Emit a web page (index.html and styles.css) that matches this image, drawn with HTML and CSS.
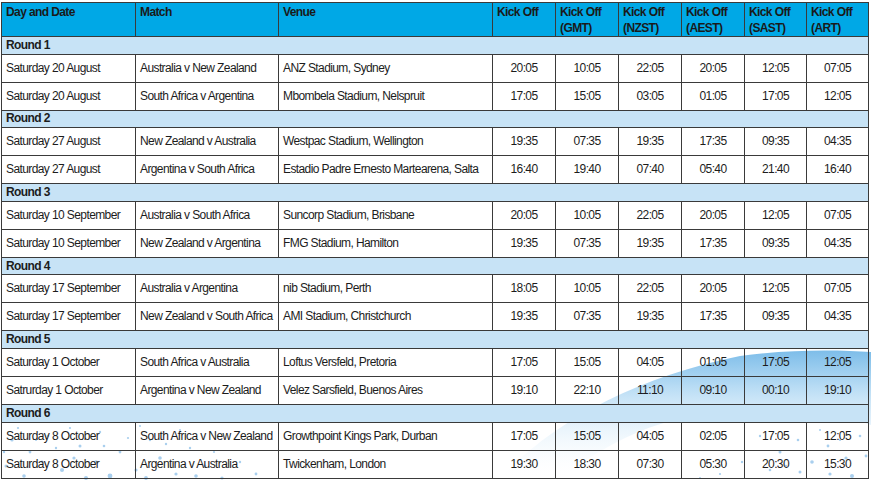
FILE: index.html
```html
<!DOCTYPE html>
<html>
<head>
<meta charset="utf-8">
<link rel="stylesheet" href="styles.css">
</head>
<body>
<div class="page">
  <svg class="decor" width="871" height="480" viewBox="0 0 871 480" aria-hidden="true">
    <defs>
      <linearGradient id="sw" x1="0" y1="0" x2="0" y2="1">
        <stop offset="0" stop-color="#7dbde9"/>
        <stop offset="0.3" stop-color="#bcdef5"/>
        <stop offset="1" stop-color="#ffffff" stop-opacity="0"/>
      </linearGradient>
    </defs>
    <path d="M498 480 C555 420 635 378 740 356 C790 349 840 350 871 352 L871 425 C800 398 700 402 625 438 C595 453 575 466 560 480 Z" fill="url(#sw)"/>
    <g fill="#a9cfee">
      <circle cx="12" cy="440" r="1.6"/><circle cx="30" cy="452" r="1.4"/><circle cx="48" cy="436" r="1.3"/>
      <circle cx="62" cy="470" r="2"/><circle cx="80" cy="446" r="1.5"/><circle cx="96" cy="462" r="1.8"/>
      <circle cx="110" cy="476" r="2.4"/><circle cx="120" cy="452" r="1.4"/><circle cx="136" cy="470" r="1.6"/>
      <circle cx="150" cy="440" r="1.2"/><circle cx="160" cy="458" r="1.8"/><circle cx="176" cy="474" r="1.6"/>
      <circle cx="190" cy="448" r="1.2"/><circle cx="205" cy="466" r="1.5"/><circle cx="222" cy="478" r="1.6"/>
      <circle cx="240" cy="462" r="1.2"/><circle cx="6" cy="466" r="1.5"/><circle cx="24" cy="476" r="1.8"/>
      <circle cx="42" cy="462" r="1.4"/><circle cx="70" cy="428" r="1.1"/><circle cx="100" cy="432" r="1.2"/>
      <circle cx="86" cy="478" r="2"/><circle cx="140" cy="426" r="1"/><circle cx="180" cy="430" r="1"/>
      <circle cx="18" cy="428" r="1.1"/><circle cx="56" cy="448" r="1.2"/><circle cx="74" cy="458" r="1.6"/>
      <circle cx="104" cy="446" r="1.3"/><circle cx="128" cy="438" r="1.1"/><circle cx="146" cy="478" r="1.9"/>
      <circle cx="166" cy="444" r="1.2"/><circle cx="196" cy="476" r="1.8"/><circle cx="214" cy="452" r="1.1"/>
      <circle cx="256" cy="474" r="1.4"/><circle cx="36" cy="440" r="1"/><circle cx="4" cy="452" r="1.2"/>
      <circle cx="760" cy="436" r="1.2"/><circle cx="780" cy="452" r="1.5"/><circle cx="798" cy="440" r="1.3"/>
      <circle cx="812" cy="462" r="1.8"/><circle cx="828" cy="446" r="1.4"/><circle cx="846" cy="458" r="1.6"/>
      <circle cx="860" cy="436" r="1.3"/><circle cx="852" cy="476" r="2"/><circle cx="830" cy="474" r="1.6"/>
      <circle cx="800" cy="472" r="1.5"/><circle cx="770" cy="470" r="1.3"/><circle cx="742" cy="462" r="1.2"/>
      <circle cx="720" cy="474" r="1.1"/><circle cx="866" cy="456" r="1.4"/><circle cx="820" cy="430" r="1"/>
      <circle cx="700" cy="478" r="1"/><circle cx="786" cy="466" r="1.2"/><circle cx="840" cy="440" r="1.1"/>
    </g>
  </svg>
  <table class="fixtures">
    <colgroup>
      <col class="c-date"><col class="c-match"><col class="c-venue">
      <col class="c-time"><col class="c-time"><col class="c-time"><col class="c-time"><col class="c-time2"><col class="c-time2">
    </colgroup>
    <thead>
      <tr class="head">
        <th>Day and Date</th><th>Match</th><th>Venue</th>
        <th>Kick Off</th><th>Kick Off<br>(GMT)</th><th>Kick Off<br>(NZST)</th><th>Kick Off<br>(AEST)</th><th>Kick Off<br>(SAST)</th><th>Kick Off<br>(ART)</th>
      </tr>
    </thead>
    <tbody>
      <tr class="round"><td colspan="9">Round 1</td></tr>
      <tr class="row"><td>Saturday 20 August</td><td>Australia v New Zealand</td><td>ANZ Stadium, Sydney</td><td class="t">20:05</td><td class="t">10:05</td><td class="t">22:05</td><td class="t">20:05</td><td class="t">12:05</td><td class="t">07:05</td></tr>
      <tr class="row"><td>Saturday 20 August</td><td>South Africa v Argentina</td><td>Mbombela Stadium, Nelspruit</td><td class="t">17:05</td><td class="t">15:05</td><td class="t">03:05</td><td class="t">01:05</td><td class="t">17:05</td><td class="t">12:05</td></tr>
      <tr class="round"><td colspan="9">Round 2</td></tr>
      <tr class="row"><td>Saturday 27 August</td><td>New Zealand v Australia</td><td>Westpac Stadium, Wellington</td><td class="t">19:35</td><td class="t">07:35</td><td class="t">19:35</td><td class="t">17:35</td><td class="t">09:35</td><td class="t">04:35</td></tr>
      <tr class="row"><td>Saturday 27 August</td><td>Argentina v South Africa</td><td>Estadio Padre Ernesto Martearena, Salta</td><td class="t">16:40</td><td class="t">19:40</td><td class="t">07:40</td><td class="t">05:40</td><td class="t">21:40</td><td class="t">16:40</td></tr>
      <tr class="round"><td colspan="9">Round 3</td></tr>
      <tr class="row"><td>Saturday 10 September</td><td>Australia v South Africa</td><td>Suncorp Stadium, Brisbane</td><td class="t">20:05</td><td class="t">10:05</td><td class="t">22:05</td><td class="t">20:05</td><td class="t">12:05</td><td class="t">07:05</td></tr>
      <tr class="row"><td>Saturday 10 September</td><td>New Zealand v Argentina</td><td>FMG Stadium, Hamilton</td><td class="t">19:35</td><td class="t">07:35</td><td class="t">19:35</td><td class="t">17:35</td><td class="t">09:35</td><td class="t">04:35</td></tr>
      <tr class="round"><td colspan="9">Round 4</td></tr>
      <tr class="row"><td>Saturday 17 September</td><td>Australia v Argentina</td><td>nib Stadium, Perth</td><td class="t">18:05</td><td class="t">10:05</td><td class="t">22:05</td><td class="t">20:05</td><td class="t">12:05</td><td class="t">07:05</td></tr>
      <tr class="row"><td>Saturday 17 September</td><td>New Zealand v South Africa</td><td>AMI Stadium, Christchurch</td><td class="t">19:35</td><td class="t">07:35</td><td class="t">19:35</td><td class="t">17:35</td><td class="t">09:35</td><td class="t">04:35</td></tr>
      <tr class="round"><td colspan="9">Round 5</td></tr>
      <tr class="row"><td>Saturday 1 October</td><td>South Africa v Australia</td><td>Loftus Versfeld, Pretoria</td><td class="t">17:05</td><td class="t">15:05</td><td class="t">04:05</td><td class="t">01:05</td><td class="t">17:05</td><td class="t">12:05</td></tr>
      <tr class="row"><td>Satrurday 1 October</td><td>Argentina v New Zealand</td><td>Velez Sarsfield, Buenos Aires</td><td class="t">19:10</td><td class="t">22:10</td><td class="t">11:10</td><td class="t">09:10</td><td class="t">00:10</td><td class="t">19:10</td></tr>
      <tr class="round"><td colspan="9">Round 6</td></tr>
      <tr class="row"><td>Saturday 8 October</td><td>South Africa v New Zealand</td><td>Growthpoint Kings Park, Durban</td><td class="t">17:05</td><td class="t">15:05</td><td class="t">04:05</td><td class="t">02:05</td><td class="t">17:05</td><td class="t">12:05</td></tr>
      <tr class="row"><td>Saturday 8 October</td><td>Argentina v Australia</td><td>Twickenham, London</td><td class="t">19:30</td><td class="t">18:30</td><td class="t">07:30</td><td class="t">05:30</td><td class="t">20:30</td><td class="t">15:30</td></tr>
    </tbody>
  </table>
</div>
</body>
</html>
```

FILE: styles.css
```css
html, body {
  margin: 0;
  padding: 0;
  background: #ffffff;
}

.page {
  position: relative;
  width: 871px;
  height: 480px;
  overflow: hidden;
  padding: 2px 0 0 1px;
  box-sizing: border-box;
  font-family: "Liberation Sans", Arial, sans-serif;
  color: #1c1c1c;
}

.decor {
  position: absolute;
  left: 0;
  top: 0;
  z-index: 0;
}

.fixtures {
  position: relative;
  z-index: 1;
  border-collapse: collapse;
  table-layout: fixed;
  width: 868px;
  font-size: 12px;
  letter-spacing: -0.6px;
  border: 1px solid #6a6a6a;
}

.c-date { width: 134px; }
.c-match { width: 143px; }
.c-venue { width: 214px; }
.c-time { width: 63px; }
.c-time2 { width: 62px; }

.fixtures th,
.fixtures td {
  border: 1px solid #3a3a3a;
  padding: 0 0 0 4px;
  white-space: nowrap;
  overflow: hidden;
}

.head {
  height: 34px;
}

.head th {
  background: #00a8e6;
  font-weight: bold;
  text-align: left;
  vertical-align: top;
  line-height: 16px;
  padding-top: 1px;
  color: #1a1a1a;
}

.round {
  height: 17.6px;
}

.round td {
  background: #c7e3f6;
  font-weight: bold;
  line-height: 13px;
  vertical-align: middle;
}

.row {
  height: 28px;
}

.row td {
  line-height: 13px;
  vertical-align: middle;
  background: transparent;
}

.row td.t {
  text-align: center;
  padding-left: 0;
}
```
